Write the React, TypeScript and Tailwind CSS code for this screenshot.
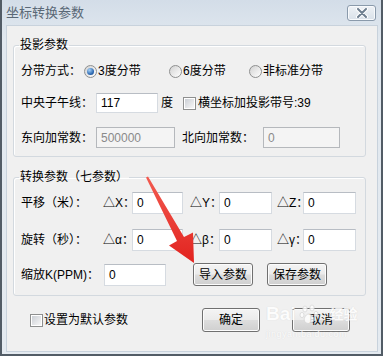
import React from "react";

const font = "font-['Liberation_Sans','Noto_Sans_CJK_SC',sans-serif]";

function Radio({ checked }: { checked?: boolean }) {
  return (
    <span className="flex h-[13px] w-[13px] shrink-0 items-center justify-center rounded-full border border-[#8e8f8f] bg-[linear-gradient(135deg,#d2d2d2,#ffffff)]">
      {checked && (
        <span className="h-[7px] w-[7px] rounded-full bg-[radial-gradient(circle_at_35%_30%,#a6d2f7,#2a66b0_65%,#173f73)]" />
      )}
    </span>
  );
}

function Check() {
  return (
    <span className="flex h-[13px] w-[13px] shrink-0 items-center justify-center border border-[#8e8f8f] bg-white">
      <span className="h-[9px] w-[9px] bg-[linear-gradient(135deg,#cbcfd5,#f7f7f7)]" />
    </span>
  );
}

function TextBox({ w, h = 22, value, disabled }: { w: string; h?: number; value: string; disabled?: boolean }) {
  return (
    <div
      className={`${w} flex shrink-0 items-center border pl-[4px] ${
        disabled ? "border-[#b5b8bc] bg-[#f4f4f4] text-[#8a8a8a]" : "border-[#d6dbe1] border-t-[#b8bdc4] bg-white text-black"
      }`}
      style={{ height: h }}
    >
      {value}
    </div>
  );
}

function Button({ w, h = 23, label }: { w: string; h?: number; label: string }) {
  return (
    <div
      className={`${w} flex shrink-0 items-center justify-center rounded-[3px] border border-[#707070] bg-[linear-gradient(#f4f4f4_0%,#ebebeb_48%,#dddddd_52%,#cfcfcf_100%)] text-[12px] shadow-[inset_0_0_0_1px_#fcfcfc]`}
      style={{ height: h }}
    >
      {label}
    </div>
  );
}

function CloseButton() {
  return (
    <div className="flex h-[16px] w-[29px] items-center justify-center rounded-[3px] border border-[#8a9aab] bg-[linear-gradient(#eef2f6,#d9e1e9)] shadow-[inset_0_0_0_1px_#f8fafc]">
      <svg width="12" height="10" viewBox="0 0 12 10">
        <path d="M2 1 L10 9 M10 1 L2 9" stroke="#ffffff" strokeWidth="4" strokeLinecap="round" />
        <path d="M2 1 L10 9 M10 1 L2 9" stroke="#6f7f90" strokeWidth="2" strokeLinecap="round" />
      </svg>
    </div>
  );
}

export default function App() {
  return (
    <div className={`relative h-[356px] w-[383px] overflow-hidden bg-white text-[12px] leading-[14px] text-black ${font}`}>
      <div className="flex h-full flex-col border-x-2 border-b-2 border-[#525c66] bg-[linear-gradient(#d3dde8,#e1e8ef_40px,#e4eaf0)]">
        {/* Title bar */}
        <div className="flex h-[25px] shrink-0 items-center justify-between pl-[4px] pr-[5px]">
          <span className="text-[13px] text-[#5a6876]">坐标转换参数</span>
          <CloseButton />
        </div>

        {/* Client area */}
        <div className="mb-[2px] ml-[4px] mr-[3px] flex-1 border border-[#c8d2dc] bg-[#f0f0f0]">
          {/* 投影参数 */}
          <fieldset className="ml-[6px] mt-[12px] w-[353px] rounded-[3px] border border-[#d3d9df] pb-[8px] pl-[7px] shadow-[inset_1px_1px_0_#ffffff]">
            <legend className="ml-[-2px] px-[1px] leading-[14px]">投影参数</legend>
            <div className="mt-[9px] flex h-[20px] items-center">
              <span className="w-[63px] shrink-0">分带方式：</span>
              <div className="flex w-[85px] items-center gap-[1px]">
                <Radio checked />
                <span>3度分带</span>
              </div>
              <div className="flex w-[80px] items-center gap-[1px]">
                <Radio />
                <span>6度分带</span>
              </div>
              <div className="flex items-center gap-[1px]">
                <Radio />
                <span>非标准分带</span>
              </div>
            </div>
            <div className="mt-[12px] flex h-[20px] items-center">
              <span className="w-[75px] shrink-0">中央子午线：</span>
              <TextBox w="w-[62px]" h={20} value="117" />
              <span className="ml-[3px]">度</span>
              <span className="ml-[10px]">
                <Check />
              </span>
              <span className="ml-[2px]">横坐标加投影带号:39</span>
            </div>
            <div className="mt-[14px] flex h-[21px] items-center">
              <span className="w-[75px] shrink-0">东向加常数：</span>
              <TextBox w="w-[79px]" h={21} value="500000" disabled />
              <span className="ml-[7px] w-[81px] shrink-0">北向加常数：</span>
              <TextBox w="w-[77px]" h={21} value="0" disabled />
            </div>
          </fieldset>

          {/* 转换参数 */}
          <fieldset className="ml-[6px] mt-[13px] w-[353px] rounded-[3px] border border-[#d3d9df] pb-[9px] pl-[7px] shadow-[inset_1px_1px_0_#ffffff]">
            <legend className="ml-[-2px] px-[1px] leading-[14px]">转换参数（七参数）</legend>
            <div className="mt-[8px] flex h-[22px] items-center">
              <span className="w-[82px] shrink-0">平移（米）：</span>
              <span className="w-[29px] shrink-0 whitespace-nowrap">△X：</span>
              <TextBox w="w-[51px]" value="0" />
              <span className="ml-[7px] w-[29px] shrink-0 whitespace-nowrap">△Y：</span>
              <TextBox w="w-[53px]" value="0" />
              <span className="ml-[5px] w-[26px] shrink-0 whitespace-nowrap">△Z：</span>
              <TextBox w="w-[53px]" value="0" />
            </div>
            <div className="mt-[15px] flex h-[22px] items-center">
              <span className="w-[82px] shrink-0">旋转（秒）：</span>
              <span className="w-[29px] shrink-0 whitespace-nowrap">△α：</span>
              <TextBox w="w-[51px]" value="0" />
              <span className="ml-[7px] w-[29px] shrink-0 whitespace-nowrap">△β：</span>
              <TextBox w="w-[53px]" value="0" />
              <span className="ml-[5px] w-[26px] shrink-0 whitespace-nowrap">△γ：</span>
              <TextBox w="w-[53px]" value="0" />
            </div>
            <div className="mt-[12px] flex h-[23px] items-center">
              <span className="w-[83px] shrink-0 whitespace-nowrap">缩放K(PPM)：</span>
              <TextBox w="w-[62px]" value="0" />
              <span className="ml-[27px]">
                <Button w="w-[60px]" label="导入参数" />
              </span>
              <span className="ml-[14px]">
                <Button w="w-[60px]" label="保存参数" />
              </span>
            </div>
          </fieldset>

          {/* Footer */}
          <div className="mt-[12px] flex h-[24px] items-center pl-[23px]">
            <div className="flex w-[172px] shrink-0 items-center gap-[1px]">
              <Check />
              <span>设置为默认参数</span>
            </div>
            <Button w="w-[58px]" h={24} label="确定" />
            <span className="ml-[32px]">
              <Button w="w-[58px]" h={24} label="取消" />
            </span>
          </div>
        </div>
      </div>

      {/* Red annotation arrow */}
      <svg className="pointer-events-none absolute left-0 top-0" width="383" height="356" viewBox="0 0 383 356">
        <defs>
          <linearGradient id="arr" x1="0" y1="0" x2="0" y2="1">
            <stop offset="0" stopColor="#f25a4f" />
            <stop offset="1" stopColor="#e2231f" />
          </linearGradient>
        </defs>
        <polygon points="146,177.5 177,241 169,245.5 194,263 193,232.5 184,237 148,176.5" fill="url(#arr)" />
      </svg>

      {/* Watermark */}
      <div className="pointer-events-none absolute left-[266px] top-[303px] flex flex-col text-white opacity-80 [text-shadow:0_0_1px_#cfcfcf]">
        <div className="flex items-end">
          <span className="font-['Liberation_Sans',sans-serif] text-[19px] font-bold leading-[22px]">Bai</span>
          <svg width="20" height="22" viewBox="0 0 20 22" className="mx-[3px]">
            <g fill="#ffffff" stroke="#d2d2d2" strokeWidth="0.8">
              <ellipse cx="6" cy="6" rx="2.2" ry="3" />
              <ellipse cx="13" cy="5" rx="2.2" ry="3" />
              <ellipse cx="3" cy="12" rx="2" ry="2.6" />
              <ellipse cx="17" cy="11" rx="2" ry="2.6" />
              <path d="M10 11 C6 11 4 17 6 19 C8 21 12 21 14 19 C16 17 14 11 10 11 Z" />
            </g>
          </svg>
          <span className="ml-[8px] text-[14px] font-bold leading-[22px]">经验</span>
        </div>
        <span className="mt-[4px] text-[9px] leading-[10px] tracking-[0.5px]">jingyan.baidu.com</span>
      </div>
    </div>
  );
}
